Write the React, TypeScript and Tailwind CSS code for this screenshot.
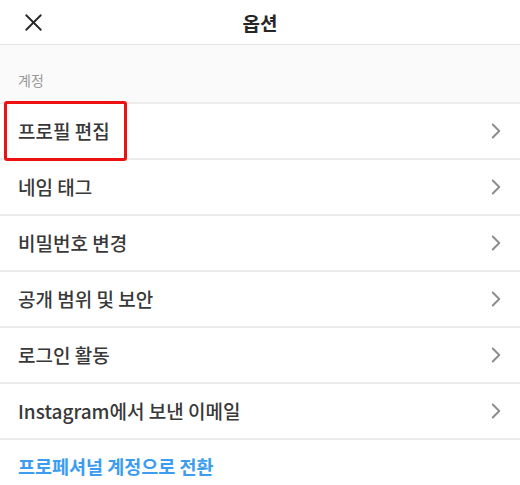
import { X, ChevronRight } from 'lucide-react';

const rows = [
  '프로필 편집',
  '네임 태그',
  '비밀번호 변경',
  '공개 범위 및 보안',
  '로그인 활동',
  'Instagram에서 보낸 이메일',
];

const App = () => {
  return (
    <div
      className="w-[520px] h-[485px] bg-white overflow-hidden text-[#262626]"
      style={{ fontFamily: '"Noto Sans CJK KR", "Noto Sans", sans-serif' }}
    >
      <header className="relative flex items-center justify-center h-[45px] border-b border-[#e3e3e3]">
        <X className="absolute left-[19px] top-[8px] w-[29px] h-[29px]" strokeWidth={1.5} />
        <h1 className="text-[19px] font-bold leading-none">옵션</h1>
      </header>
      <div className="h-[59px] bg-[#fafafa] flex items-center px-[18px] pt-[14px] border-b-2 border-[#ececec]">
        <span className="text-[14px] text-[#999999]">계정</span>
      </div>
      <div className="relative">
        {rows.map((label, i) => (
          <div
            key={i}
            className="h-[56px] flex items-center justify-between pl-[18px] pr-[11px] border-b-2 border-[#ececec]"
          >
            <span className="text-[19px] font-medium text-[#383838]">{label}</span>
            <ChevronRight className="w-[26px] h-[26px] text-[#8e8e8e]" strokeWidth={1.8} />
          </div>
        ))}
        <div className="absolute left-[4px] top-[-3px] w-[123px] h-[60px] border-[3px] border-[#ee1111] rounded-[3px]" />
      </div>
      <div className="h-[54px] flex items-center px-[18px]">
        <span className="text-[18.5px] font-semibold text-[#3b9cf0]">프로페셔널 계정으로 전환</span>
      </div>
    </div>
  );
};

export default App;
